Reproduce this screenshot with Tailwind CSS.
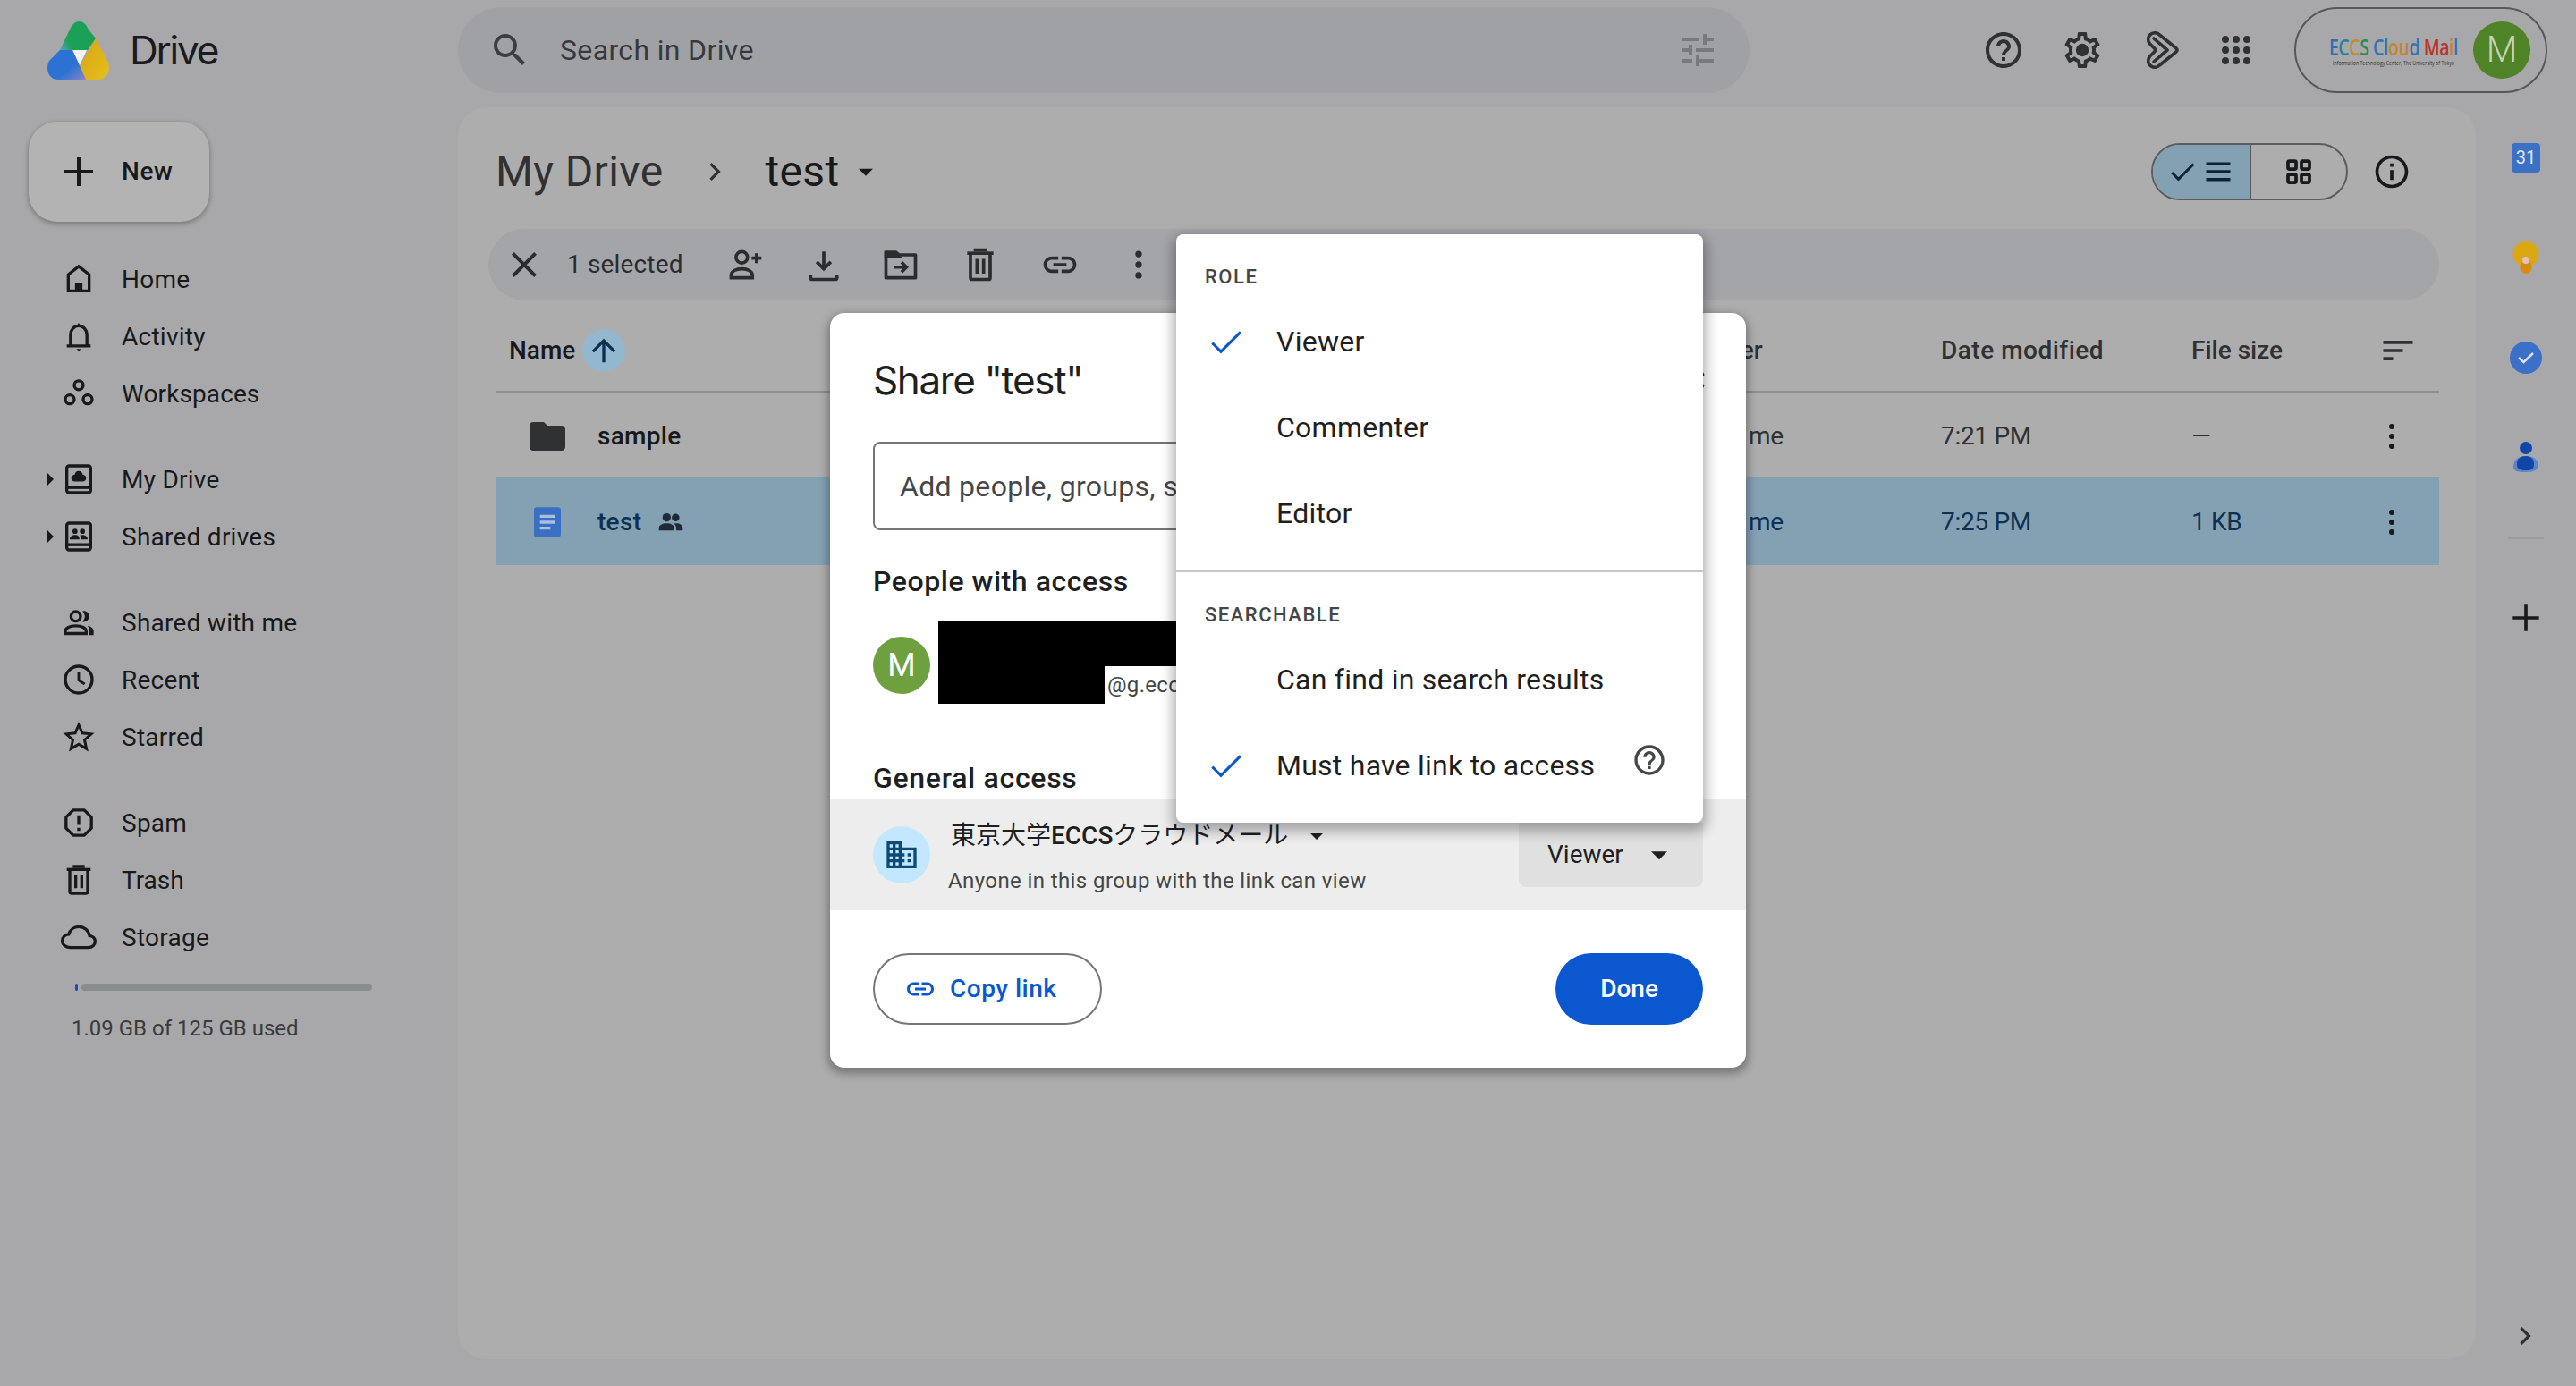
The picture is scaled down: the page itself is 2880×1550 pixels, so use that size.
<!DOCTYPE html>
<html lang="en">
<head>
<meta charset="utf-8">
<title>Drive</title>
<script src="https://cdn.jsdelivr.net/npm/@tailwindcss/browser@4"></script>
</head>
<body class="w-[2880px] h-[1550px] relative overflow-hidden bg-[#a8a8aa] text-[#18191b] [font-family:Roboto,'Noto_Sans_CJK_JP',sans-serif]">

<header class="h-[112px] flex items-center">
  <div class="w-[512px] flex items-center pl-[53px] gap-[23px]">
    <svg class="w-[69px] h-[65px] overflow-visible" viewBox="0 0 69 65">
      <defs>
        <linearGradient id="g1" x1="0" x2="1" y1="1" y2="0.4"><stop offset="0" stop-color="#5f9fc0"/><stop offset="0.3" stop-color="#1aa157"/></linearGradient>
        <linearGradient id="b1" x1="0" x2="1" y1="0" y2="1"><stop offset="0.6" stop-color="#2b72d2"/><stop offset="1" stop-color="#8a84c8"/></linearGradient>
        <linearGradient id="y1" x1="0" x2="1" y1="0" y2="1"><stop offset="0" stop-color="#d8a214"/><stop offset="1" stop-color="#e6c01c"/></linearGradient>
      </defs>
      <path d="M28 32h16l-8 17z" fill="#f2f2f2"/>
      <path d="M14 32L25 9C30 -3 41 -3 46 9L54 19L45 32Z" fill="url(#g1)"/>
      <path d="M54 19L67 44C72 54 66 65 56 65L43 65L36 50Z" fill="url(#y1)"/>
      <path d="M14 32L28 32L43 65L12 65C2 65 -3 54 2 44Z" fill="url(#b1)"/>
    </svg>
    <span class="text-[44px] leading-none text-[#1a1b1d] [font-family:Inter,sans-serif] tracking-[-2.2px]">Drive</span>
  </div>
  <div class="w-[1444px] h-[96px] rounded-[48px] bg-[#9fa1a5] flex items-center pl-[34px] pr-[34px]">
    <svg class="w-[48px] h-[48px]" viewBox="0 0 24 24" fill="#3c3d40"><path d="M15.5 14h-.79l-.28-.27A6.471 6.471 0 0 0 16 9.5 6.5 6.5 0 1 0 9.5 16c1.61 0 3.09-.59 4.23-1.57l.27.28v.79l5 4.99L20.49 19l-4.99-5zm-6 0C7.01 14 5 11.99 5 9.5S7.01 5 9.5 5 14 7.01 14 9.5 11.99 14 9.5 14z"/></svg>
    <span class="ml-[32px] text-[32px] text-[#38393c] tracking-[0.35px]">Search in Drive</span>
    <svg class="ml-auto w-[48px] h-[48px]" viewBox="0 0 24 24" fill="#77797c"><path d="M3 17v2h6v-2H3zM3 5v2h10V5H3zm10 16v-2h8v-2h-8v-2h-2v6h2zM7 9v2H3v2h4v2h2V9H7zm14 4v-2H11v2h10zm-6-4h2V7h4V5h-4V3h-2v6z"/></svg>
  </div>
  <div class="flex items-center ml-[260px]">
    <svg class="w-[48px] h-[48px]" viewBox="0 0 24 24" fill="#303134"><path d="M11 18h2v-2h-2v2zm1-16C6.48 2 2 6.48 2 12s4.48 10 10 10 10-4.48 10-10S17.52 2 12 2zm0 18c-4.41 0-8-3.59-8-8s3.59-8 8-8 8 3.59 8 8-3.59 8-8 8zm0-14c-2.21 0-4 1.79-4 4h2c0-1.1.9-2 2-2s2 .9 2 2c0 2-3 1.75-3 5h2c0-2.25 3-2.5 3-5 0-2.21-1.79-4-4-4z"/></svg>
    <svg class="ml-[40px] w-[48px] h-[48px]" viewBox="0 0 24 24" fill="#303134"><path d="M19.43 12.98c.04-.32.07-.64.07-.98 0-.34-.03-.66-.07-.98l2.11-1.65c.19-.15.24-.42.12-.64l-2-3.46c-.09-.16-.26-.25-.44-.25-.06 0-.12.01-.17.03l-2.49 1c-.52-.4-1.08-.73-1.69-.98l-.38-2.65C14.46 2.18 14.25 2 14 2h-4c-.25 0-.46.18-.49.42l-.38 2.65c-.61.25-1.17.59-1.69.98l-2.49-1c-.06-.02-.12-.03-.18-.03-.17 0-.34.09-.43.25l-2 3.46c-.13.22-.07.49.12.64l2.11 1.65c-.04.32-.07.65-.07.98 0 .33.03.66.07.98l-2.11 1.65c-.19.15-.24.42-.12.64l2 3.46c.09.16.26.25.44.25.06 0 .12-.01.17-.03l2.49-1c.52.4 1.08.73 1.69.98l.38 2.65c.03.24.24.42.49.42h4c.25 0 .46-.18.49-.42l.38-2.65c.61-.25 1.17-.59 1.69-.98l2.49 1c.06.02.12.03.18.03.17 0 .34-.09.43-.25l2-3.46c.12-.22.07-.49-.12-.64l-2.11-1.65zm-1.98-1.71c.04.31.05.52.05.73 0 .21-.02.43-.05.73l-.14 1.13.89.7 1.08.84-.7 1.21-1.27-.51-1.04-.42-.9.68c-.43.32-.84.56-1.25.73l-1.06.43-.16 1.13-.2 1.35h-1.4l-.19-1.35-.16-1.13-1.06-.43c-.43-.18-.83-.41-1.23-.71l-.91-.7-1.06.43-1.27.51-.7-1.21 1.08-.84.89-.7-.14-1.13c-.03-.31-.05-.54-.05-.74s.02-.43.05-.73l.14-1.13-.89-.7-1.08-.84.7-1.21 1.27.51 1.04.42.9-.68c.43-.32.84-.56 1.25-.73l1.06-.43.16-1.13.2-1.35h1.39l.19 1.35.16 1.13 1.06.43c.43.18.83.41 1.23.71l.91.7 1.06-.43 1.27-.51.7 1.21-1.07.85-.89.7.14 1.13z"/><circle cx="12" cy="12" r="3.6"/></svg>
    <svg class="ml-[40px] w-[48px] h-[48px]" viewBox="0 0 24 24" fill="none" stroke="#303134" stroke-width="1.800" stroke-linejoin="round" stroke-linecap="round"><path d="M6.500 3C8 2 10 2.300 11.200 3.500L20.500 11c.7.6.7 1.400 0 2l-9.300 7.500C10 21.700 8 22 6.500 21 4.500 19.700 4.300 17.300 5.800 15.500L8.500 12.800c.4-.5.4-1.100 0-1.600L5.800 8.500C4.300 6.700 4.500 4.300 6.500 3z"/><path d="M8 5.500L15.500 12 8 18.500"/><path d="M11.500 8.500L15.500 12l-4 3.500"/></svg>
    <svg class="ml-[36px] w-[48px] h-[48px]" viewBox="0 0 24 24" fill="#303134"><circle cx="6" cy="6" r="2"/><circle cx="12" cy="6" r="2"/><circle cx="18" cy="6" r="2"/><circle cx="6" cy="12" r="2"/><circle cx="12" cy="12" r="2"/><circle cx="18" cy="12" r="2"/><circle cx="6" cy="18" r="2"/><circle cx="12" cy="18" r="2"/><circle cx="18" cy="18" r="2"/></svg>
    <div class="ml-[41px] w-[283px] h-[96px] rounded-[48px] border-2 border-[#55575a] flex items-center pl-[43px] pr-[17px]">
      <div class="flex flex-col items-center w-[132px] scale-x-75 [font-family:'Open_Sans',sans-serif] leading-none">
        <div class="text-[26px] font-semibold tracking-[-0.6px] whitespace-nowrap"><span class="text-[#2f6fae]">E</span><span class="text-[#2e7f9e]">C</span><span class="text-[#c48a2e]">C</span><span class="text-[#2e8a5a]">S</span> <span class="text-[#2f74b5]">Cl</span><span class="text-[#c9832c]">ou</span><span class="text-[#2f74b5]">d</span> <span class="text-[#b8362c]">Ma</span><span class="text-[#c9832c]">i</span><span class="text-[#2f74b5]">l</span></div>
        <div class="text-[7px] text-[#333] whitespace-nowrap mt-[2px]">Information Technology Center, The University of Tokyo</div>
      </div>
      <div class="ml-auto w-[64px] h-[64px] rounded-full bg-[#4f8327] text-[#c5d3b8] text-[40px] font-light flex items-center justify-center">M</div>
    </div>
  </div>
</header>

<div class="flex pt-[8px] h-[1438px] items-start">
  <aside class="w-[512px] pt-[16px] text-[28px] tracking-[0.25px] [&_nav>div>span]:pt-[2px]">
    <button class="ml-[32px] w-[202px] h-[112px] rounded-[32px] bg-[#b3b3b4] shadow-[0_2px_5px_1px_rgba(0,0,0,0.25)] flex items-center pl-[32px]">
      <svg class="w-[48px] h-[48px]" viewBox="0 0 24 24" fill="#18191b"><path d="M20 13h-7v7h-2v-7H4v-2h7V4h2v7h7z"/></svg>
      <span class="ml-[24px] font-medium tracking-[0.6px]">New</span>
    </button>

    <nav class="mt-[32px]">
      <div class="flex items-center h-[64px]"><div class="w-[68px]"></div><svg class="w-[40px] h-[40px]" viewBox="0 0 24 24" fill="none" stroke="#18191b" stroke-width="2"><path d="M12 3.500l7 5.500v11H5V9z"/><path d="M9.500 14.500h5V21h-5z" fill="#18191b" stroke="none"/></svg><span class="ml-[28px]">Home</span></div>
      <div class="flex items-center h-[64px]"><div class="w-[68px]"></div><svg class="w-[40px] h-[40px]" viewBox="0 0 24 24" fill="none" stroke="#18191b" stroke-width="2"><path d="M4 18.500h16M6.500 18.500V11c0-3.200 2.300-6 5.500-6s5.500 2.800 5.500 6v7.500"/><path d="M10.500 20.500h3L12 22zM11 4.500l1-1.500 1 1.500z" fill="#18191b" stroke="none"/></svg><span class="ml-[28px]">Activity</span></div>
      <div class="flex items-center h-[64px]"><div class="w-[68px]"></div><svg class="w-[40px] h-[40px]" viewBox="0 0 24 24" fill="none" stroke="#18191b" stroke-width="2"><circle cx="12" cy="6.500" r="3"/><circle cx="6" cy="16" r="3"/><circle cx="18" cy="16" r="3"/></svg><span class="ml-[28px] tracking-[0.1px]">Workspaces</span></div>
    </nav>

    <nav class="mt-[32px]">
      <div class="flex items-center h-[64px]"><svg class="ml-[53px] w-[7px] h-[14px] mr-[8px]" viewBox="0 0 7 14" fill="#18191b"><path d="M0 0l7 7-7 7z"/></svg><svg class="w-[40px] h-[40px]" viewBox="0 0 24 24" fill="none" stroke="#18191b" stroke-width="2"><rect x="4" y="3" width="16" height="18" rx="1.500"/><path d="M4 17.500h16"/><path d="M12 6.500c1.500 0 2.300 1 2.700 2.300 1.300.2 2.300 1 2.300 2.400 0 1.400-1.100 2.300-2.500 2.300h-5c-1.400 0-2.500-.9-2.500-2.300 0-1.400 1-2.200 2.300-2.400.4-1.300 1.200-2.300 2.700-2.300z" fill="#18191b" stroke="none"/></svg><span class="ml-[28px]">My Drive</span></div>
      <div class="flex items-center h-[64px]"><svg class="ml-[53px] w-[7px] h-[14px] mr-[8px]" viewBox="0 0 7 14" fill="#18191b"><path d="M0 0l7 7-7 7z"/></svg><svg class="w-[40px] h-[40px]" viewBox="0 0 24 24" fill="none" stroke="#18191b" stroke-width="2"><rect x="4" y="3" width="16" height="18" rx="1.500"/><path d="M4 17.500h16"/><g fill="#18191b" stroke="none"><circle cx="9.500" cy="8.500" r="1.700"/><circle cx="14.500" cy="8.500" r="1.700"/><path d="M6 14c0-2 1.700-3 3.500-3s3 .7 3 3zM13.500 14c0-1 0-2-.8-2.700.6-.2 1.200-.3 1.800-.3 1.800 0 3.500 1 3.500 3z"/></g></svg><span class="ml-[28px]">Shared drives</span></div>
    </nav>

    <nav class="mt-[32px]">
      <div class="flex items-center h-[64px]"><div class="w-[68px]"></div><svg class="w-[40px] h-[40px]" viewBox="0 0 24 24" fill="none" stroke="#18191b" stroke-width="2"><circle cx="10" cy="8" r="3.200"/><path d="M3 19.500v-1.500c0-2.300 3-3.700 7-3.700s7 1.400 7 3.700v1.500z"/><path d="M14.500 4.500c2-.6 4.500.8 4.500 3.500s-2.500 4.100-4.500 3.500c1-1 1.600-2.200 1.600-3.500s-.6-2.500-1.600-3.500zM18 14.300c2.200.5 4 1.700 4 3.700v2.500h-3V18c0-1.500-.3-2.600-1-3.700z" fill="#18191b" stroke="none"/></svg><span class="ml-[28px]">Shared with me</span></div>
      <div class="flex items-center h-[64px]"><div class="w-[68px]"></div><svg class="w-[40px] h-[40px]" viewBox="0 0 24 24" fill="none" stroke="#18191b" stroke-width="2"><circle cx="12" cy="12" r="9"/><path d="M12 7v5.500l4 2.500" stroke-width="1.700"/></svg><span class="ml-[28px]">Recent</span></div>
      <div class="flex items-center h-[64px]"><div class="w-[68px]"></div><svg class="w-[40px] h-[40px]" viewBox="0 0 24 24" fill="none" stroke="#18191b" stroke-width="1.800"><path d="M12 4l2.400 5.500 6 .6-4.500 4 1.300 5.900-5.200-3.100-5.200 3.100 1.300-5.900-4.500-4 6-.6z"/></svg><span class="ml-[28px]">Starred</span></div>
    </nav>

    <nav class="mt-[32px]">
      <div class="flex items-center h-[64px]"><div class="w-[68px]"></div><svg class="w-[40px] h-[40px]" viewBox="0 0 24 24" fill="none" stroke="#18191b" stroke-width="2"><path d="M8.300 3.500h7.400L20.500 8.300v7.400l-4.800 4.800H8.300L3.500 15.700V8.300z" stroke-linejoin="round"/><path d="M12 7v6.500M12 15.500v2"/></svg><span class="ml-[28px]">Spam</span></div>
      <div class="flex items-center h-[64px]"><div class="w-[68px]"></div><svg class="w-[40px] h-[40px]" viewBox="0 0 24 24" fill="none" stroke="#18191b" stroke-width="2"><path d="M4 5h16"/><path d="M6 5v15a1 1 0 0 0 1 1h10a1 1 0 0 0 1-1V5"/><path d="M10 8.500v9M14 8.500v9M9 4V3h6v1"/></svg><span class="ml-[28px] tracking-[0px]">Trash</span></div>
      <div class="flex items-center h-[64px]"><div class="w-[68px]"></div><svg class="w-[40px] h-[40px] overflow-visible" viewBox="0 0 24 24" fill="none" stroke="#18191b" stroke-width="2"><path d="M6.500 19C3.500 19 1 17.200 1 14.500 1 12 3 10.300 5.300 10.100 6.200 7.100 8.800 5 12 5c3.800 0 6.700 2.700 7.200 6 2.200.3 3.800 1.800 3.800 3.900 0 2.400-2 4.100-4.500 4.100z"/></svg><span class="ml-[28px]">Storage</span></div>
    </nav>

    <div class="mt-[20px] ml-[84px] flex items-center gap-[4px] h-[8px]">
      <div class="w-[3px] h-[8px] bg-[#1f4db3] rounded-full"></div>
      <div class="w-[325px] h-[8px] bg-[#8a8d8f] rounded-full"></div>
    </div>
    <div class="mt-[26px] ml-[80px] text-[24px] leading-[32px] text-[#3a3b3d] tracking-[0px]">1.09 GB of 125 GB used</div>
  </aside>

  <main class="w-[2256px] h-[1400px] rounded-[32px] bg-[#adadae] pt-[36px] pl-[34px] pr-[41px]">
    <div class="h-[72px] flex items-center pl-[8px]">
      <span class="text-[48px] text-[#303133] tracking-[0.4px]">My Drive</span>
      <svg class="ml-[38px] w-[40px] h-[40px]" viewBox="0 0 24 24" fill="#303133"><path d="M9.400 6L8 7.400l4.600 4.600L8 16.600 9.400 18l6-6z"/></svg>
      <span class="ml-[36px] text-[48px] text-[#18191b] tracking-[0.3px]">test</span>
      <svg class="ml-[14px] w-[32px] h-[32px]" viewBox="0 0 24 24" fill="#18191b"><path d="M6 9.500h12L12 15.500z"/></svg>
      <div class="ml-auto flex h-[64px] w-[220px] rounded-[32px] border-2 border-[#5a5c5e] overflow-hidden">
        <div class="w-[110px] bg-[#84a0b3] border-r-2 border-[#5a5c5e] flex items-center pl-[15px]">
          <svg class="w-[36px] h-[36px]" viewBox="0 0 24 24" fill="#0b2236"><path d="M9 16.200l-4.200-4.200-1.400 1.400L9 19 21 7l-1.400-1.400z"/></svg>
          <svg class="ml-[4px] w-[36px] h-[36px]" viewBox="0 0 24 24" fill="#0b2236"><path d="M3 5h18v2.400H3zM3 10.800h18v2.400H3zM3 16.600h18V19H3z"/></svg>
        </div>
        <div class="flex-1 flex items-center justify-center">
          <svg class="w-[36px] h-[36px]" viewBox="0 0 24 24" fill="none" stroke="#18191b" stroke-width="2.500"><rect x="4" y="4" width="6" height="6" rx="1"/><rect x="14" y="4" width="6" height="6" rx="1"/><rect x="4" y="14" width="6" height="6" rx="1"/><rect x="14" y="14" width="6" height="6" rx="1"/></svg>
        </div>
      </div>
      <svg class="ml-[27px] mr-[31px] w-[44px] h-[44px]" viewBox="0 0 24 24" fill="#18191b"><path d="M11 7h2v2h-2zm0 4h2v6h-2zm1-9C6.480 2 2 6.480 2 12s4.480 10 10 10 10-4.480 10-10S17.520 2 12 2zm0 18c-4.410 0-8-3.590-8-8s3.590-8 8-8 8 3.590 8 8-3.590 8-8 8z"/></svg>
    </div>

    <div class="mt-[28px] h-[80px] rounded-[40px] bg-[#a3a5a9] flex items-center text-[28px] text-[#2b2c2e]">
      <svg class="ml-[16px] w-[48px] h-[48px]" viewBox="0 0 24 24" fill="#2b2c2e"><path d="M19 6.410L17.590 5 12 10.590 6.410 5 5 6.410 10.590 12 5 17.590 6.410 19 12 13.410 17.590 19 19 17.590 13.410 12z"/></svg>
      <span class="ml-[24px] w-[177px] tracking-[0.15px]">1 selected</span>
      <svg class="w-[44px] h-[44px]" viewBox="0 0 24 24" fill="none" stroke="#2b2c2e" stroke-width="2"><circle cx="10" cy="7.500" r="3.500"/><path d="M3.500 20v-1.500c0-2.500 3-4 6.500-4s6.500 1.500 6.500 4V20z"/><path d="M19 5v6M16 8h6"/></svg>
      <svg class="ml-[44px] w-[44px] h-[44px]" viewBox="0 0 24 24" fill="#2b2c2e"><path d="M13 4v8.170l2.590-2.580L17 11l-5 5-5-5 1.410-1.410L11 12.170V4zM5 18v2h14v-2h2v2a2 2 0 0 1-2 2H5a2 2 0 0 1-2-2v-2z"/></svg>
      <svg class="ml-[42px] w-[44px] h-[44px]" viewBox="0 0 24 24" fill="none" stroke="#2b2c2e" stroke-width="2"><path d="M3 6V4.500h6L11 6h10v14H3z" stroke-linejoin="round"/><path d="M3 4.500h6L11 7H3z" fill="#2b2c2e"/><path d="M8 13.500h7M12.500 10.500l3 3-3 3"/></svg>
      <svg class="ml-[45px] w-[44px] h-[44px]" viewBox="0 0 24 24" fill="none" stroke="#2b2c2e" stroke-width="2"><path d="M4 5h16"/><path d="M6 5v15a1 1 0 0 0 1 1h10a1 1 0 0 0 1-1V5"/><path d="M10 8.500v9M14 8.500v9M9 4V3h6v1"/></svg>
      <svg class="ml-[45px] w-[44px] h-[44px]" viewBox="0 0 24 24" fill="#2b2c2e"><path d="M17 7h-4v2h4c1.650 0 3 1.350 3 3s-1.350 3-3 3h-4v2h4c2.760 0 5-2.240 5-5s-2.240-5-5-5zm-6 8H7c-1.650 0-3-1.350-3-3s1.350-3 3-3h4V7H7c-2.760 0-5 2.240-5 5s2.240 5 5 5h4v-2zm-3-4h8v2H8z"/></svg>
      <svg class="ml-[44px] w-[44px] h-[44px]" viewBox="0 0 24 24" fill="#2b2c2e"><circle cx="12" cy="5.500" r="2"/><circle cx="12" cy="12" r="2"/><circle cx="12" cy="18.500" r="2"/></svg>
    </div>

    <div class="ml-[9px]">
      <div class="h-[103px] pt-[10px] border-b-2 border-[#8d8e90] flex items-center text-[28px] font-medium text-[#303133]">
        <div class="w-[1335px] flex items-center pl-[14px]">
          <span class="text-[#18191b]">Name</span>
          <div class="ml-[8px] w-[48px] h-[48px] rounded-full bg-[#93b7ce] flex items-center justify-center"><svg class="w-[40px] h-[40px]" viewBox="0 0 24 24" fill="#0b2f4e"><path d="M4 12l1.410 1.410L11 7.830V20h2V7.830l5.580 5.590L20 12l-8-8z"/></svg></div>
        </div>
        <div class="w-[280px]">Owner</div>
        <div class="w-[280px] tracking-[0.5px]">Date modified</div>
        <div class="w-[200px]">File size</div>
        <svg class="ml-[9px] w-[44px] h-[44px]" viewBox="0 0 24 24" fill="#303133"><path d="M3 6h18v2H3zM3 11h12v2H3zM3 16h6v2H3z"/></svg>
      </div>
      <div class="h-[95px] pt-[2px] flex items-center text-[28px] text-[#303133] tracking-[-0.3px]">
        <div class="w-[1335px] flex items-center pl-[33px]">
          <svg class="w-[48px] h-[48px]" viewBox="0 0 24 24" fill="#303133"><path d="M10 4H4c-1.100 0-2 .900-2 2v12c0 1.100.900 2 2 2h16c1.100 0 2-.900 2-2V8c0-1.100-.900-2-2-2h-8z"/></svg>
          <span class="ml-[32px] font-medium text-[#18191b] tracking-[0.3px]">sample</span>
        </div>
        <div class="w-[280px] pl-[65px]">me</div>
        <div class="w-[280px]">7:21 PM</div>
        <div class="w-[200px]">—</div>
        <svg class="w-[48px] h-[48px]" viewBox="0 0 24 24" fill="#18191b"><circle cx="12" cy="6.500" r="1.500"/><circle cx="12" cy="12" r="1.500"/><circle cx="12" cy="17.500" r="1.500"/></svg>
      </div>
      <div class="h-[98px] pt-[2px] flex items-center text-[28px] bg-[#84a0b3] text-[#0c3152] tracking-[-0.3px]">
        <div class="w-[1335px] flex items-center pl-[37px]">
          <svg class="w-[40px] h-[40px]" viewBox="0 0 24 24"><rect x="3" y="2" width="18" height="20" rx="2" fill="#3a6fc4"/><path d="M7 7h10v2H7zM7 11h10v2H7zM7 15h7v2H7z" fill="#a9c0dc"/></svg>
          <span class="ml-[36px] font-medium tracking-[0.3px]">test</span>
          <svg class="ml-[17px] w-[32px] h-[32px]" viewBox="0 0 24 24" fill="#1e2a36"><circle cx="8.500" cy="8" r="3.500"/><circle cx="16" cy="8" r="3.200"/><path d="M2 19v-2c0-2.500 3-4 6.500-4s6.500 1.500 6.500 4v2zM16.500 19v-2c0-1.500-.700-2.800-2-3.800.7-.1 1.300-.2 2-.2 3 0 5.500 1.500 5.500 4v2z"/></svg>
        </div>
        <div class="w-[280px] pl-[65px]">me</div>
        <div class="w-[280px]">7:25 PM</div>
        <div class="w-[200px]">1 KB</div>
        <svg class="w-[48px] h-[48px]" viewBox="0 0 24 24" fill="#18191b"><circle cx="12" cy="6.500" r="1.500"/><circle cx="12" cy="12" r="1.500"/><circle cx="12" cy="17.500" r="1.500"/></svg>
      </div>
    </div>
  </main>

  <aside class="w-[112px] h-[1430px] flex flex-col items-center">
    <div class="h-[112px] flex items-center justify-center"><div class="w-[32px] h-[33px] rounded-[4px] bg-[#3a70c6] text-[#dfe7f2] text-[20px] leading-[33px] text-center">31</div></div>
    <div class="h-[112px] flex items-center justify-center"><svg class="w-[30px] h-[36px]" viewBox="0 0 30 36"><ellipse cx="15" cy="14" rx="14.500" ry="14" fill="#dba814"/><rect x="8.500" y="21" width="13" height="15" rx="6.500" fill="#d98b10"/><rect x="11" y="17" width="8" height="8" rx="4" fill="#e0c0c0"/></svg></div>
    <div class="h-[112px] flex items-center justify-center"><svg class="w-[36px] h-[36px]" viewBox="0 0 36 36"><circle cx="18" cy="18" r="18" fill="#3a70c8"/><path d="M10 18l5.500 5L26 13" fill="none" stroke="#dbe2ee" stroke-width="2.500"/></svg></div>
    <div class="h-[112px] flex items-center justify-center"><svg class="w-[30px] h-[36px]" viewBox="0 0 30 36"><ellipse cx="15" cy="7" rx="7" ry="7" fill="#0f46a8"/><path d="M1 28c0-8 6-12 14-12 8 0 14 4 14 10 0 5-4 8-14 8C6 34 1 33 1 28z" fill="#5c85c8"/><path d="M5 25c0-6 4-9 10-9 5 0 9 3 9 9 0 6-3 7-9 7-7 0-10-1-10-7z" fill="#0f46a8"/></svg></div>
    <div class="mt-[33px] w-[40px] h-[2px] bg-[#9b9c9e]"></div>
    <svg class="mt-[66px] w-[44px] h-[44px]" viewBox="0 0 24 24" fill="#18191b"><path d="M20 13h-7v7h-2v-7H4v-2h7V4h2v7h7z"/></svg>
    <svg class="mt-auto mb-[36px] w-[40px] h-[40px]" viewBox="0 0 24 24" fill="#303133"><path d="M9.400 6L8 7.400l4.600 4.600L8 16.600 9.400 18l6-6z"/></svg>
  </aside>
</div>

<!-- Share dialog -->
<section class="absolute left-[928px] top-[350px] w-[1024px] h-[844px] bg-white rounded-[16px] shadow-[0_4px_10px_3px_rgba(0,0,0,0.3)] overflow-hidden text-[#1f1f1f]">
  <div class="pt-[52px] pl-[48px] pr-[48px] flex items-center h-[98px]">
    <h2 class="text-[44px] leading-[46px] [font-family:Inter,sans-serif] tracking-[-1.400px]">Share "test"</h2>
    <svg class="ml-auto -mr-[6px] w-[48px] h-[48px]" viewBox="0 0 24 24" fill="#1f1f1f"><path d="M19.430 12.980c.04-.32.07-.64.07-.98 0-.34-.03-.66-.07-.98l2.110-1.650c.19-.15.24-.42.12-.64l-2-3.460c-.09-.16-.26-.25-.44-.25-.06 0-.12.01-.17.03l-2.490 1c-.52-.4-1.080-.73-1.690-.98l-.38-2.650C14.460 2.180 14.250 2 14 2h-4c-.25 0-.46.18-.49.42l-.38 2.650c-.61.25-1.170.59-1.690.98l-2.490-1c-.06-.02-.12-.03-.18-.03-.17 0-.34.09-.43.25l-2 3.460c-.13.22-.07.49.12.64l2.110 1.650c-.04.32-.07.65-.07.98 0 .33.03.66.07.98l-2.110 1.650c-.19.15-.24.42-.12.64l2 3.460c.09.16.26.25.44.25.06 0 .12-.01.17-.03l2.490-1c.52.4 1.080.73 1.690.98l.38 2.650c.03.24.24.42.49.42h4c.25 0 .46-.18.49-.42l.38-2.650c.61-.25 1.170-.59 1.690-.98l2.490 1c.06.02.12.03.18.03.17 0 .34-.09.43-.25l2-3.460c.12-.22.07-.49-.12-.64l-2.110-1.650z"/></svg>
  </div>
  <div class="mt-[46px] mx-[48px] h-[99px] rounded-[8px] border-2 border-[#747775] flex items-center pl-[28px] text-[32px] text-[#444746] tracking-[0.3px]"><span class="block w-[340px] overflow-hidden whitespace-nowrap">Add people, groups, spaces and calendar events</span></div>
  <h3 class="mt-[33px] ml-[48px] h-[48px] leading-[48px] text-[32px] font-medium tracking-[0.55px]">People with access</h3>
  <div class="mt-[21px] ml-[48px] flex items-center">
    <div class="mt-[6px] shrink-0 w-[64px] h-[64px] rounded-full bg-[#6fa03f] text-white text-[36px] flex items-center justify-center">M</div>
    <div class="ml-[9px] w-[267px] shrink-0">
      <div class="w-[267px] h-[50px] bg-black"></div>
      <div class="flex items-center h-[42px]">
        <div class="w-[186px] shrink-0 h-[42px] bg-black"></div>
        <span class="block w-[78px] overflow-hidden ml-[3px] text-[24px] text-[#444746] whitespace-nowrap tracking-[0.3px]">@g.ecc.u-tokyo.ac.jp</span>
      </div>
    </div>
  </div>
  <h3 class="mt-[59px] ml-[48px] h-[48px] leading-[48px] text-[32px] font-medium tracking-[0.7px]">General access</h3>
  <div class="h-[124px] bg-[#ededed] flex items-center pl-[48px] pr-[48px]">
    <div class="w-[64px] h-[64px] rounded-full bg-[#c2e7ff] flex items-center justify-center">
      <svg class="w-[40px] h-[40px]" viewBox="0 0 24 24" fill="#0c4a78"><path d="M12 7V3H2v18h20V7H12zM6 19H4v-2h2v2zm0-4H4v-2h2v2zm0-4H4V9h2v2zm0-4H4V5h2v2zm4 12H8v-2h2v2zm0-4H8v-2h2v2zm0-4H8V9h2v2zm0-4H8V5h2v2zm10 12h-8v-2h2v-2h-2v-2h2v-2h-2V9h8v10zm-2-8h-2v2h2v-2zm0 4h-2v2h2v-2z"/></svg>
    </div>
    <div class="ml-[20px]">
      <div class="flex items-center h-[40px] text-[28px] leading-[40px] ml-[3px] whitespace-nowrap mt-[4px]"><span>東京大学<b class="font-medium">ECCS</b>クラウドメール</span><svg class="ml-[18px] w-[28px] h-[28px]" viewBox="0 0 24 24" fill="#1f1f1f"><path d="M6 9.500h12L12 15.500z"/></svg></div>
      <div class="mt-[14px] h-[32px] leading-[32px] text-[24px] text-[#444746] tracking-[0.4px] whitespace-nowrap">Anyone in this group with the link can view</div>
    </div>
    <div class="ml-auto w-[206px] h-[72px] rounded-b-[8px] bg-[#e0e0e0] flex items-center pl-[32px] text-[28px]">Viewer<svg class="ml-[22px] w-[36px] h-[36px]" viewBox="0 0 24 24" fill="#1f1f1f"><path d="M6 9.500h12L12 15.500z"/></svg></div>
  </div>
  <div class="mt-[48px] mx-[48px] flex justify-between">
    <button class="w-[256px] h-[80px] rounded-[40px] border-2 border-[#747775] flex items-center pl-[33px] text-[28px] font-medium text-[#0b57d0]">
      <svg class="w-[36px] h-[36px]" viewBox="0 0 24 24" fill="#0b57d0"><path d="M17 7h-4v2h4c1.650 0 3 1.350 3 3s-1.350 3-3 3h-4v2h4c2.760 0 5-2.240 5-5s-2.240-5-5-5zm-6 8H7c-1.650 0-3-1.350-3-3s1.350-3 3-3h4V7H7c-2.760 0-5 2.240-5 5s2.240 5 5 5h4v-2zm-3-4h8v2H8z"/></svg>
      <span class="ml-[15px] tracking-[0.5px]">Copy link</span>
    </button>
    <button class="w-[165px] h-[80px] rounded-[40px] bg-[#0b57d0] text-white text-[28px] font-medium flex items-center justify-center">Done</button>
  </div>
</section>

<!-- Role menu -->
<div class="absolute left-[1315px] top-[262px] w-[589px] h-[658px] bg-white rounded-[8px] shadow-[0_6px_14px_4px_rgba(0,0,0,0.3)] text-[32px] text-[#1f1f1f] tracking-[0.25px]">
  <div class="pt-[23px] h-[72px] pl-[32px] text-[22px] leading-[50px] font-medium tracking-[1.5px] text-[#444746]">ROLE</div>
  <div class="h-[96px] flex items-center pl-[32px]"><svg class="w-[48px] h-[48px]" viewBox="0 0 24 24" fill="#0b57d0"><path d="M9 16.500l-4.300-4.300-1.100 1.100L9 18.700 20.500 7.200l-1.100-1.100z"/></svg><span class="ml-[32px]">Viewer</span></div>
  <div class="h-[96px] flex items-center pl-[112px]">Commenter</div>
  <div class="h-[96px] flex items-center pl-[112px]">Editor</div>
  <div class="mt-[16px] h-[2px] bg-[#c7c7c7]"></div>
  <div class="pt-[23px] h-[72px] pl-[32px] text-[22px] leading-[50px] font-medium tracking-[1.5px] text-[#444746]">SEARCHABLE</div>
  <div class="h-[96px] flex items-center pl-[112px]">Can find in search results</div>
  <div class="h-[96px] flex items-center pl-[32px]"><svg class="w-[48px] h-[48px]" viewBox="0 0 24 24" fill="#0b57d0"><path d="M9 16.500l-4.300-4.300-1.100 1.100L9 18.700 20.500 7.200l-1.100-1.100z"/></svg><span class="ml-[32px]">Must have link to access</span><svg class="ml-auto mr-[40px] mb-[12px] w-[40px] h-[40px]" viewBox="0 0 24 24" fill="#444746"><path d="M11 18h2v-2h-2v2zm1-16C6.480 2 2 6.480 2 12s4.480 10 10 10 10-4.480 10-10S17.520 2 12 2zm0 18c-4.410 0-8-3.590-8-8s3.590-8 8-8 8 3.590 8 8-3.590 8-8 8zm0-14c-2.210 0-4 1.790-4 4h2c0-1.100.900-2 2-2s2 .900 2 2c0 2-3 1.750-3 5h2c0-2.250 3-2.500 3-5 0-2.210-1.790-4-4-4z"/></svg></div>
</div>
</body>
</html>
